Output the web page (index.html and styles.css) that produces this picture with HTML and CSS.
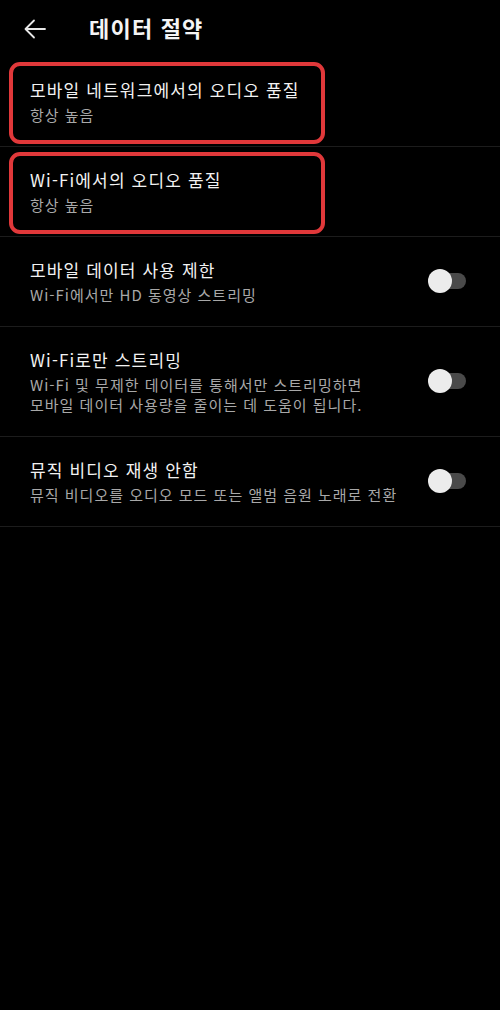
FILE: index.html
```html
<!DOCTYPE html>
<html lang="ko">
<head>
  <meta charset="UTF-8" />
  <meta name="viewport" content="width=device-width, initial-scale=1.0"/>
  <title>데이터 절약</title>
  <link rel="stylesheet" href="styles.css">
</head>
<body>
  <div class="header">
    <svg class="back" width="22" height="20" viewBox="0 0 22 20">
      <path d="M21 10H2M10 1.5L1.5 10L10 18.5" fill="none" stroke="#e8e8e8" stroke-width="1.8" stroke-linecap="round" stroke-linejoin="round"/>
    </svg>
    <div class="page-title">데이터 절약</div>
  </div>

  <div class="list">
    <div class="row">
      <div class="text">
        <div class="title">모바일 네트워크에서의 오디오 품질</div>
        <div class="sub">항상 높음</div>
      </div>
      <div class="mark"></div>
    </div>

    <div class="row">
      <div class="text">
        <div class="title">Wi-Fi에서의 오디오 품질</div>
        <div class="sub">항상 높음</div>
      </div>
      <div class="mark"></div>
    </div>

    <div class="row">
      <div class="text">
        <div class="title">모바일 데이터 사용 제한</div>
        <div class="sub">Wi-Fi에서만 HD 동영상 스트리밍</div>
      </div>
      <div class="toggle"><span class="thumb"></span></div>
    </div>

    <div class="row">
      <div class="text">
        <div class="title">Wi-Fi로만 스트리밍</div>
        <div class="sub">Wi-Fi 및 무제한 데이터를 통해서만 스트리밍하면<br>모바일 데이터 사용량을 줄이는 데 도움이 됩니다.</div>
      </div>
      <div class="toggle"><span class="thumb"></span></div>
    </div>

    <div class="row">
      <div class="text">
        <div class="title">뮤직 비디오 재생 안함</div>
        <div class="sub">뮤직 비디오를 오디오 모드 또는 앨범 음원 노래로 전환</div>
      </div>
      <div class="toggle"><span class="thumb"></span></div>
    </div>
  </div>
</body>
</html>
```

FILE: styles.css
```css
* {
  box-sizing: border-box;
  margin: 0;
  padding: 0;
}
body {
  background-color: #000;
  color: #fff;
  font-family: "Noto Sans CJK KR", "Noto Sans", sans-serif;
  width: 500px;
  min-height: 1010px;
}
.header {
  height: 57px;
  display: flex;
  align-items: center;
  padding-left: 24px;
}
.back {
  display: block;
  margin-top: 1px;
}
.page-title {
  margin-left: 43px;
  font-size: 22px;
  font-weight: bold;
  line-height: 30px;
  letter-spacing: 1.2px;
  color: #f4f4f4;
  margin-top: -3px;
}
.row {
  position: relative;
  display: flex;
  align-items: center;
  padding: 18px 34px 21px 30px;
  border-bottom: 1px solid #1c1c1c;
}
.text {
  flex: 1;
}
.title {
  font-size: 17px;
  line-height: 30px;
  letter-spacing: 1.15px;
  color: #f2f2f2;
}
.sub {
  font-size: 15px;
  line-height: 20px;
  letter-spacing: 1px;
  color: #a8a8a8;
}

/* red annotation boxes */
.mark {
  position: absolute;
  top: 5px;
  left: 9px;
  width: 316px;
  height: 82px;
  border: 4px solid #e0383a;
  border-radius: 11px;
}

.toggle {
  position: relative;
  width: 38px;
  height: 24px;
  margin-top: 2px;
}
.toggle::before {
  content: "";
  position: absolute;
  right: 0;
  top: 4px;
  width: 32px;
  height: 16px;
  border-radius: 8px;
  background-color: #4a4a4a;
}
.thumb {
  position: absolute;
  left: 0;
  top: 0;
  width: 24px;
  height: 24px;
  border-radius: 50%;
  background-color: #ececec;
}
```
